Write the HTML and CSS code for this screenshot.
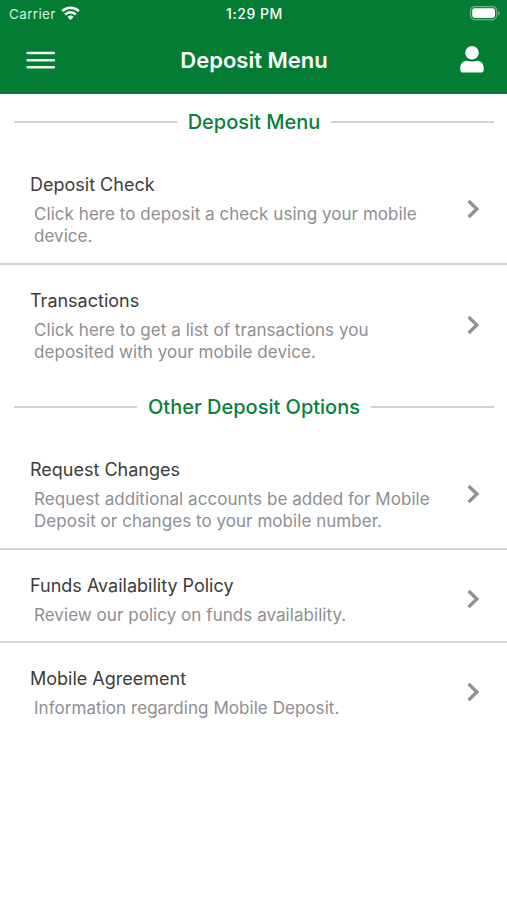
FILE: index.html
```html
<!DOCTYPE html>
<html lang="en">
<head>
<meta charset="utf-8">
<meta name="viewport" content="width=device-width, initial-scale=1">
<title>Deposit Menu</title>
<link rel="stylesheet" href="styles.css">
</head>
<body>
<svg width="0" height="0" class="defs" aria-hidden="true">
  <symbol id="chevron" viewBox="0 0 14 20"><path d="M2.600 2 10.900 10 2.600 18" fill="none" stroke="currentColor" stroke-width="3.300" stroke-linejoin="miter"/></symbol>
</svg>
<header class="header">
  <div class="status">
    <div class="carrier"><span>Carrier</span>
      <svg class="wifi" width="19" height="14" viewBox="0 0 19 14"><g fill="none" stroke="#fff" stroke-width="2.5"><path d="M1.2 5.2a11.8 11.8 0 0 1 16.6 0"/><path d="M4.2 8.500a7.500 7.500 0 0 1 10.600 0"/></g><path d="M6.500 10.900a4.300 4.300 0 0 1 6 0l-3 3z" fill="#fff"/></svg>
    </div>
    <span class="time">1:29 PM</span>
    <svg class="battery" width="30" height="15" viewBox="0 0 30 15"><rect x=".6" y=".6" width="26" height="13" rx="4" fill="none" stroke="#fff" stroke-opacity=".42" stroke-width="1.2"/><rect x="2.2" y="2.3" width="22.8" height="9.6" rx="2.3" fill="#fff"/><path d="M28 5v4.400c1.300-.5 1.800-1.200 1.800-2.200S29.300 5.500 28 5z" fill="#fff" fill-opacity=".45"/></svg>
  </div>
  <div class="navbar">
    <svg class="menu" width="29" height="18" viewBox="0 0 29 18"><path d="M1.500 2h26.500M1.500 9.200h26.500M1.500 16.200h26.500" stroke="#fff" stroke-opacity=".92" stroke-width="2.400" stroke-linecap="round"/></svg>
    <h1>Deposit Menu</h1>
    <svg class="user" width="24" height="27" viewBox="0 0 24 27"><circle cx="12" cy="6.800" r="6.800" fill="#fff"/><path d="M.3 24.300v-2.600c0-3.800 2.700-6.900 6.500-6.900 1.800 0 2.600.8 5.200.8s3.400-.8 5.200-.8c3.800 0 6.500 3.100 6.500 6.900v2.600c0 1.200-.9 2.200-2.200 2.200h-19c-1.300 0-2.200-1-2.200-2.200z" fill="#fff"/></svg>
  </div>
</header>
<main>
  <h2 class="section"><span>Deposit Menu</span></h2>
  <ul class="list">
    <li class="item"><div><h3>Deposit Check</h3><p>Click here to deposit a check using your mobile<br>device.</p></div><svg class="chevron"><use href="#chevron"/></svg></li>
    <li class="item"><div><h3>Transactions</h3><p>Click here to get a list of transactions you<br>deposited with your mobile device.</p></div><svg class="chevron"><use href="#chevron"/></svg></li>
  </ul>
  <h2 class="section section-other"><span>Other Deposit Options</span></h2>
  <ul class="list">
    <li class="item"><div><h3>Request Changes</h3><p>Request additional accounts be added for Mobile<br>Deposit or changes to your mobile number.</p></div><svg class="chevron"><use href="#chevron"/></svg></li>
    <li class="item"><div><h3>Funds Availability Policy</h3><p>Review our policy on funds availability.</p></div><svg class="chevron"><use href="#chevron"/></svg></li>
    <li class="item"><div><h3>Mobile Agreement</h3><p>Information regarding Mobile Deposit.</p></div><svg class="chevron"><use href="#chevron"/></svg></li>
  </ul>
</main>
</body>
</html>
```
FILE: styles.css
```css
* { box-sizing: border-box; margin: 0; padding: 0; }
body { background: #fff; font-family: Inter, "Liberation Sans", sans-serif; min-height: 100vh; overflow-x: hidden; }
svg { display: block; flex: none; }
.defs { display: none; }
.header { height: 94px; background: #037d34; color: #fff; }
.status { height: 27px; display: grid; grid-template-columns: 1fr auto 1fr; align-items: center; padding: 1px 7px 0 9px; font-size: 13.5px; line-height: 20px; }
.carrier { display: flex; align-items: center; gap: 5px; color: #dcefe2; letter-spacing: .35px; }
.time { font-weight: 500; font-size: 14px; letter-spacing: .55px; }
.battery { justify-self: end; margin-top: -1px; }
.wifi { margin-top: -2px; }
.navbar { height: 66px; display: grid; grid-template-columns: 1fr auto 1fr; align-items: center; padding: 0 23px 0 26px; }
.navbar h1 { font-size: 22px; line-height: 28px; font-weight: 600; margin-left: -2px; }
.menu { margin-top: -1px; }
.user { justify-self: end; margin-top: -1px; }
.section { height: 54px; padding: 2px 13px 0 14px; display: flex; align-items: center; gap: 11px; color: #087f3a; font-size: 20px; line-height: 26px; font-weight: 500; }
.section-other { height: 55px; padding-top: 3px; }
.section::before, .section::after { content: ""; flex: 1; height: 2px; background: #d2d2d2; }
.list { list-style: none; }
.item { display: flex; align-items: center; justify-content: space-between; padding: 25px 27px 16.5px 30px; }
.item + .item { border-top: 2px solid #d4d4d6; padding-top: 24px; padding-bottom: 15.5px; }
.item h3 { font-size: 18px; line-height: 24px; font-weight: 400; color: #3c3c3c; margin-bottom: 5.5px; }
.item p { font-size: 17px; line-height: 22px; letter-spacing: .05px; color: #8e8e93; padding-left: 4px; white-space: nowrap; }
.chevron { width: 14px; height: 20px; margin-top: -2px; color: #919194; }
```
